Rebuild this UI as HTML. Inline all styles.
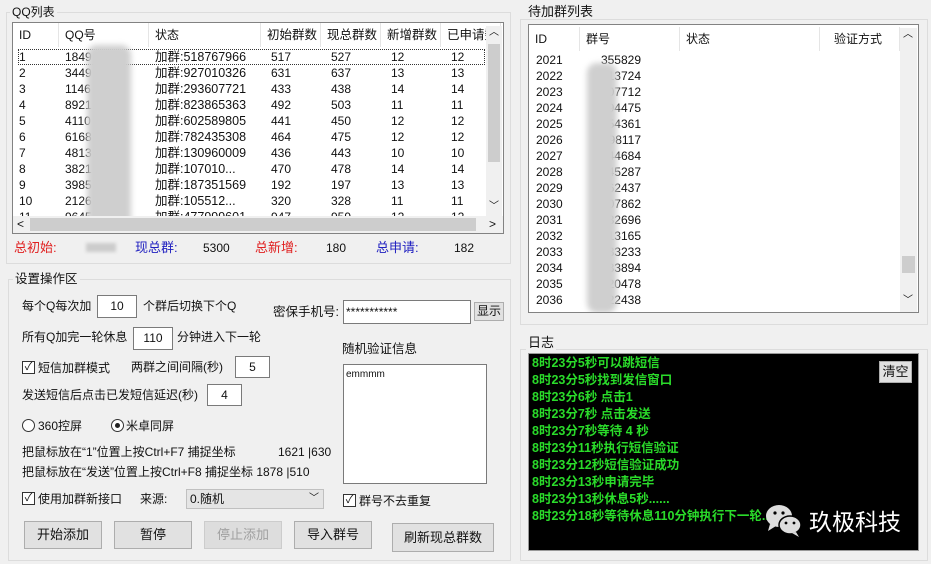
<!DOCTYPE html>
<html><head><meta charset="utf-8">
<style>
*{margin:0;padding:0;box-sizing:border-box}
body{width:931px;height:564px;background:#f0f0f0;position:relative;overflow:hidden;font-family:"Liberation Sans","Noto Sans CJK SC",sans-serif;font-size:12px;color:#111}
.a{position:absolute;white-space:nowrap;line-height:14px}
.gb{position:absolute;border:1px solid #dcdcdc}
.lbl{position:absolute;background:#f0f0f0;padding:0 2px;font-size:12px;line-height:14px}
.box{position:absolute;background:#fff;border:1px solid #828282}
.in{position:absolute;background:#fff;border:1px solid #7a7a7a;font-size:12px;text-align:center}
.btn{position:absolute;background:#e1e1e1;border:1px solid #adadad;text-align:center;font-size:13px}
.cb{position:absolute;width:13px;height:13px;border:1px solid #333;background:#fff;font-size:11px;line-height:11px;text-align:center}
.rd{position:absolute;width:13px;height:13px;border:1px solid #333;border-radius:50%;background:#fff}
.sb{position:absolute;background:#f0f0f0}
.th{position:absolute;top:0;height:24px;line-height:24px;border-right:1px solid #e5e5e5;padding-left:6px;font-size:12px}
.blur{position:absolute;background:#cfcfcf;filter:blur(3px);border-radius:10px}
.log div{height:17px;line-height:17px;color:#2adb2a;font-weight:bold;font-size:12.5px}
</style></head><body>

<!-- QQ list -->
<div class="gb" style="left:6px;top:12px;width:505px;height:252px"></div>
<div class="lbl" style="left:10px;top:5px">QQ列表</div>
<div class="box" style="left:12px;top:22px;width:492px;height:212px;overflow:hidden">
  <div class="th" style="left:0;width:46px">ID</div>
  <div class="th" style="left:46px;width:90px">QQ号</div>
  <div class="th" style="left:136px;width:112px">状态</div>
  <div class="th" style="left:248px;width:60px;font-size:12.5px">初始群数</div>
  <div class="th" style="left:308px;width:60px;font-size:12.5px">现总群数</div>
  <div class="th" style="left:368px;width:60px;font-size:12.5px">新增群数</div>
  <div class="th" style="left:428px;width:60px;font-size:12.5px">已申请数</div>
  <div style="position:absolute;left:5px;top:26px;width:467px;height:16px;border:1px dotted #333"></div>
  <div id="rows"></div>
  <div class="blur" style="left:74px;top:22px;width:44px;height:188px"></div>
  <div class="sb" style="left:473px;top:3px;width:16px;height:190px"><div style="position:absolute;left:2px;top:18px;width:12px;height:118px;background:#cdcdcd"></div><div class="a" style="left:3px;top:0;font-size:10px">︿</div><div class="a" style="left:3px;top:174px;font-size:10px">﹀</div></div>
  <div class="sb" style="left:0;top:193px;width:490px;height:17px"><div style="position:absolute;left:17px;top:2px;width:446px;height:13px;background:#cdcdcd"></div><div class="a" style="left:4px;top:1px">&lt;</div><div class="a" style="left:476px;top:1px">&gt;</div></div>
</div>
<div class="a" style="left:14px;top:241px;color:#e02020;font-size:13px">总初始:</div>
<div style="position:absolute;left:86px;top:243px;width:30px;height:9px;background:#ccc;filter:blur(1.5px)"></div>
<div class="a" style="left:135px;top:241px;color:#2020c0;font-size:13px">现总群:</div>
<div class="a" style="left:203px;top:241px">5300</div>
<div class="a" style="left:255px;top:241px;color:#e02020;font-size:13px">总新增:</div>
<div class="a" style="left:326px;top:241px">180</div>
<div class="a" style="left:376px;top:241px;color:#2020c0;font-size:13px">总申请:</div>
<div class="a" style="left:454px;top:241px">182</div>

<!-- settings -->
<div class="gb" style="left:8px;top:279px;width:503px;height:282px"></div>
<div class="lbl" style="left:13px;top:272px;font-size:12.5px">设置操作区</div>
<div class="a" style="left:22px;top:299px">每个Q每次加</div>
<div class="in" style="left:97px;top:295px;width:40px;height:23px;line-height:21px">10</div>
<div class="a" style="left:143px;top:299px">个群后切换下个Q</div>
<div class="a" style="left:273px;top:305px;font-size:12.5px">密保手机号:</div>
<div class="in" style="left:343px;top:300px;width:128px;height:24px;line-height:22px;text-align:left;padding-left:2px">***********</div>
<div class="btn" style="left:474px;top:302px;width:30px;height:19px;line-height:17px;font-size:12px">显示</div>
<div class="a" style="left:22px;top:330px">所有Q加完一轮休息</div>
<div class="in" style="left:133px;top:327px;width:40px;height:23px;line-height:21px">110</div>
<div class="a" style="left:177px;top:330px">分钟进入下一轮</div>
<div class="a" style="left:342px;top:342px;font-size:12.5px">随机验证信息</div>
<div class="cb" style="left:22px;top:361px">✓</div>
<div class="a" style="left:38px;top:361px">短信加群模式</div>
<div class="a" style="left:131px;top:360px">两群之间间隔(秒)</div>
<div class="in" style="left:235px;top:356px;width:35px;height:22px;line-height:20px">5</div>
<div class="a" style="left:22px;top:388px">发送短信后点击已发短信延迟(秒)</div>
<div class="in" style="left:207px;top:384px;width:35px;height:22px;line-height:20px">4</div>
<div class="box" style="left:343px;top:364px;width:144px;height:120px;border-color:#7a7a7a"><div class="a" style="left:2px;top:3px;font-size:10px">emmmm</div></div>
<div class="rd" style="left:22px;top:419px"></div>
<div class="a" style="left:38px;top:419px">360控屏</div>
<div class="rd" style="left:111px;top:419px"><div style="position:absolute;left:3px;top:3px;width:5px;height:5px;border-radius:50%;background:#222"></div></div>
<div class="a" style="left:126px;top:419px">米卓同屏</div>
<div class="a" style="left:22px;top:445px">把鼠标放在“1”位置上按Ctrl+F7 捕捉坐标</div>
<div class="a" style="left:278px;top:445px">1621 |630</div>
<div class="a" style="left:22px;top:465px">把鼠标放在“发送”位置上按Ctrl+F8 捕捉坐标 1878 |510</div>
<div class="cb" style="left:22px;top:492px">✓</div>
<div class="a" style="left:38px;top:492px">使用加群新接口</div>
<div class="a" style="left:140px;top:492px">来源:</div>
<div style="position:absolute;left:186px;top:489px;width:138px;height:20px;background:#e5e5e5;border:1px solid #c0c0c0"><div class="a" style="left:3px;top:2px;font-size:12px">0.随机</div><div class="a" style="left:122px;top:2px;font-size:10px">﹀</div></div>
<div class="cb" style="left:343px;top:494px">✓</div>
<div class="a" style="left:359px;top:494px">群号不去重复</div>
<div class="btn" style="left:24px;top:521px;width:78px;height:28px;line-height:26px">开始添加</div>
<div class="btn" style="left:114px;top:521px;width:78px;height:28px;line-height:26px">暂停</div>
<div class="btn" style="left:204px;top:521px;width:78px;height:28px;line-height:26px;color:#a0a0a0;background:#ddd;border-color:#ccc">停止添加</div>
<div class="btn" style="left:294px;top:521px;width:78px;height:28px;line-height:26px">导入群号</div>
<div class="btn" style="left:392px;top:523px;width:102px;height:29px;line-height:27px">刷新现总群数</div>

<!-- right list -->
<div class="gb" style="left:520px;top:19px;width:408px;height:306px"></div>
<div class="lbl" style="left:526px;top:5px;font-size:13px">待加群列表</div>
<div class="box" style="left:528px;top:24px;width:391px;height:289px;overflow:hidden">
  <div class="th" style="left:0;width:51px;top:2px">ID</div>
  <div class="th" style="left:51px;width:100px;top:2px">群号</div>
  <div class="th" style="left:151px;width:140px;top:2px">状态</div>
  <div class="th" style="left:291px;width:80px;top:2px;padding-left:14px">验证方式</div>
  <div id="rows2"></div>
  <div class="blur" style="left:58px;top:38px;width:30px;height:250px"></div>
  <div class="sb" style="left:371px;top:3px;width:17px;height:284px"><div style="position:absolute;left:2px;top:228px;width:13px;height:17px;background:#cdcdcd"></div><div class="a" style="left:3px;top:0;font-size:10px">︿</div><div class="a" style="left:3px;top:266px;font-size:10px">﹀</div></div>
</div>

<!-- log -->
<div class="gb" style="left:520px;top:349px;width:408px;height:212px"></div>
<div class="lbl" style="left:526px;top:336px;font-size:13px">日志</div>
<div style="position:absolute;left:528px;top:353px;width:391px;height:198px;background:#000;border:1px solid #999">
  <div class="log" style="position:absolute;left:3px;top:1px">
    <div>8时23分5秒可以跳短信</div><div>8时23分5秒找到发信窗口</div><div>8时23分6秒 点击1</div><div>8时23分7秒 点击发送</div><div>8时23分7秒等待 4 秒</div><div>8时23分11秒执行短信验证</div><div>8时23分12秒短信验证成功</div><div>8时23分13秒申请完毕</div><div>8时23分13秒休息5秒......</div><div>8时23分18秒等待休息110分钟执行下一轮...</div>
  </div>
  <div class="btn" style="left:350px;top:7px;width:33px;height:22px;line-height:20px;font-size:13px">清空</div>
  <svg style="position:absolute;left:236px;top:150px" width="38" height="34" viewBox="0 0 38 34">
    <ellipse cx="14" cy="12" rx="13" ry="11" fill="#ddd"/><path d="M5 20 L3 27 L11 22Z" fill="#ddd"/>
    <ellipse cx="25" cy="21" rx="11" ry="9" fill="#ddd" stroke="#000" stroke-width="1.5"/><path d="M31 28 L34 33 L27 29Z" fill="#ddd"/>
    <circle cx="10" cy="9" r="1.6" fill="#000"/><circle cx="18" cy="9" r="1.6" fill="#000"/><circle cx="21" cy="19" r="1.4" fill="#000"/><circle cx="29" cy="19" r="1.4" fill="#000"/>
  </svg>
  <div class="a" style="left:280px;top:155px;color:#fff;font-size:23px;line-height:26px">玖极科技</div>
</div>

<script>
var d=[["1","1849","加群:518767966","517","527","12","12"],["2","3449","加群:927010326","631","637","13","13"],["3","1146","加群:293607721","433","438","14","14"],["4","8921","加群:823865363","492","503","11","11"],["5","4110","加群:602589805","441","450","12","12"],["6","6168","加群:782435308","464","475","12","12"],["7","4813","加群:130960009","436","443","10","10"],["8","3821","加群:107010...","470","478","14","14"],["9","3985","加群:187351569","192","197","13","13"],["10","2126","加群:105512...","320","328","11","11"],["11","9645","加群:477999601","947","959","12","12"]];
var h="";d.forEach(function(r,i){var t=27+i*16;h+='<div class="a" style="left:6px;top:'+t+'px">'+r[0]+'</div><div class="a" style="left:52px;top:'+t+'px">'+r[1]+'</div><div class="a" style="left:142px;top:'+t+'px;font-size:12.5px">'+r[2]+'</div><div class="a" style="left:258px;top:'+t+'px">'+r[3]+'</div><div class="a" style="left:318px;top:'+t+'px">'+r[4]+'</div><div class="a" style="left:378px;top:'+t+'px">'+r[5]+'</div><div class="a" style="left:438px;top:'+t+'px">'+r[6]+'</div>';});
document.getElementById("rows").innerHTML=h;
var g=["355829","413724","07712","94475","54361","98117","44684","45287","62437","07862","32696","13165","33233","33894","20478","22438"];h="";
g.forEach(function(v,i){var t=28+i*16;h+='<div class="a" style="left:7px;top:'+t+'px">'+(2021+i)+'</div><div class="a" style="left:70px;top:'+t+'px;width:42px;text-align:right">'+v+'</div>';});
document.getElementById("rows2").innerHTML=h;
</script>
</body></html>
